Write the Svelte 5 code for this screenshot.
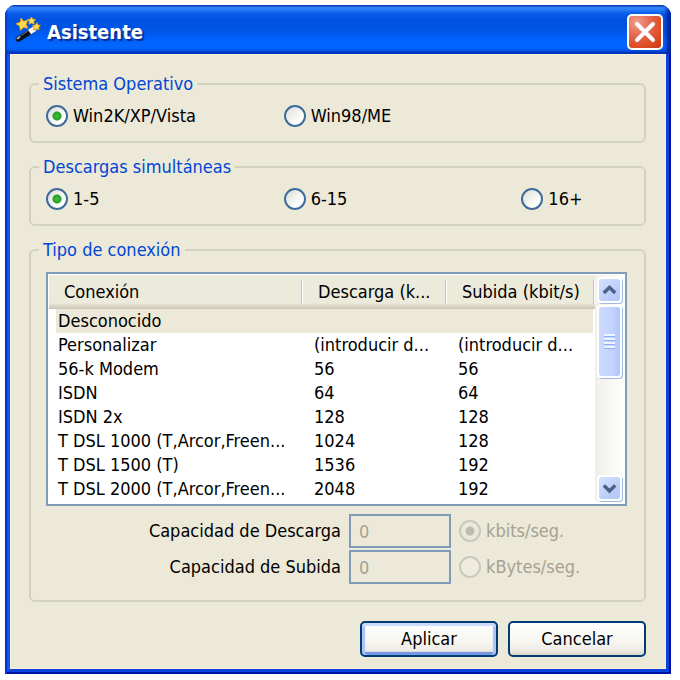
<script lang="ts">
	interface Connection {
		name: string;
		down: string;
		up: string;
	}

	const connections: Connection[] = [
		{ name: 'Desconocido', down: '', up: '' },
		{ name: 'Personalizar', down: '(introducir d...', up: '(introducir d...' },
		{ name: '56-k Modem', down: '56', up: '56' },
		{ name: 'ISDN', down: '64', up: '64' },
		{ name: 'ISDN 2x', down: '128', up: '128' },
		{ name: 'T DSL 1000 (T,Arcor,Freen...', down: '1024', up: '128' },
		{ name: 'T DSL 1500 (T)', down: '1536', up: '192' },
		{ name: 'T DSL 2000 (T,Arcor,Freen...', down: '2048', up: '192' }
	];

	const systems = ['Win2K/XP/Vista', 'Win98/ME'];
	const downloads = ['1-5', '6-15', '16+'];

	let system = $state('Win2K/XP/Vista');
	let simultaneous = $state('1-5');
	let selected = $state(0);
	let unit = $state('kbits');

	let custom = $derived(connections[selected].name === 'Personalizar');
</script>

<div class="window">
	<header class="titlebar">
		<svg class="wand" viewBox="0 0 26 26" aria-hidden="true">
			<path d="M3.500 22L15.500 14.500" stroke="#0c0f16" stroke-width="5.500" stroke-linecap="round" />
			<path d="M6 18.500L15 12.500" stroke="#555c6c" stroke-width="1.500" stroke-linecap="round" />
			<path d="M2.500 21.500L4.500 20" stroke="#aab2c4" stroke-width="2" stroke-linecap="round" />
			<path d="M14.500 15L20 11.500" stroke="#f6f4ee" stroke-width="5.500" />
			<path
				d="M6 1l2.500 3.200 4.500-1-2 4 2 4-4.500-.800-3.200 3-.600-4.400L1 6.800l4.400-1.800z"
				fill="#ffda45"
				stroke="#e0a51c"
				stroke-width=".8"
			/>
			<path
				d="M16.500 0l1.300 2.200 2.700.300-1.800 2 .500 2.700-2.700-1.200-2.500 1.200.400-2.700-1.900-2 2.700-.300z"
				fill="#ffe05a"
				stroke="#e0a51c"
				stroke-width=".8"
			/>
			<path
				d="M22 5.500l1 2.300 2.500.600-1.700 2 .300 2.700-2.600-.900-2.700 1 .200-2.700-1.700-2 3-.600z"
				fill="#ffda55"
				stroke="#c98a1c"
				stroke-width=".8"
			/>
		</svg>
		<h1>Asistente</h1>
		<button type="button" class="close" aria-label="Cerrar">
			<svg viewBox="0 0 30 30" aria-hidden="true">
				<path d="M7 7L23 23M23 7L7 23" stroke="#fff" stroke-width="4" stroke-linecap="round" />
			</svg>
		</button>
	</header>

	<form class="body" onsubmit={(e) => e.preventDefault()}>
		<fieldset>
			<legend>Sistema Operativo</legend>
			<div class="options">
				{#each systems as item}
					<label class="option">
						<input type="radio" name="system" value={item} bind:group={system} />
						{item}
					</label>
				{/each}
			</div>
		</fieldset>

		<fieldset>
			<legend>Descargas simultáneas</legend>
			<div class="options">
				{#each downloads as item}
					<label class="option">
						<input type="radio" name="downloads" value={item} bind:group={simultaneous} />
						{item}
					</label>
				{/each}
			</div>
		</fieldset>

		<fieldset class="connection">
			<legend>Tipo de conexión</legend>
			<div class="list">
				<table>
					<colgroup>
						<col />
						<col class="col-down" />
						<col class="col-up" />
					</colgroup>
					<thead>
						<tr>
							<th><span>Conexión</span></th>
							<th><span>Descarga (k...</span></th>
							<th><span>Subida (kbit/s)</span></th>
						</tr>
					</thead>
					<tbody>
						{#each connections as row, i}
							<tr class:selected={selected === i} onclick={() => (selected = i)}>
								<td>{row.name}</td>
								<td>{row.down}</td>
								<td>{row.up}</td>
							</tr>
						{/each}
					</tbody>
				</table>
				<div class="scrollbar">
					<button type="button" class="arrow" aria-label="Subir">
						<svg viewBox="0 0 24 24" aria-hidden="true">
							<path d="M5.500 15.500L12 9l6.500 6.500" />
						</svg>
					</button>
					<div class="thumb">
						<i></i><i></i><i></i><i></i>
					</div>
					<button type="button" class="arrow down" aria-label="Bajar">
						<svg viewBox="0 0 24 24" aria-hidden="true">
							<path d="M5.500 9L12 15.500 18.500 9" />
						</svg>
					</button>
				</div>
			</div>

			<div class="capacity">
				<label for="cap-down">Capacidad de Descarga</label>
				<input id="cap-down" type="text" value="0" disabled={!custom} />
				<label class="option" class:disabled={!custom}>
					<input type="radio" name="unit" value="kbits" bind:group={unit} disabled={!custom} />
					kbits/seg.
				</label>
				<label for="cap-up">Capacidad de Subida</label>
				<input id="cap-up" type="text" value="0" disabled={!custom} />
				<label class="option" class:disabled={!custom}>
					<input type="radio" name="unit" value="kbytes" bind:group={unit} disabled={!custom} />
					kBytes/seg.
				</label>
			</div>
		</fieldset>

		<div class="actions">
			<button type="submit" class="btn default">Aplicar</button>
			<button type="button" class="btn">Cancelar</button>
		</div>
	</form>
</div>

<style>
	:global(body) {
		background: #fff;
	}

	.window,
	.window button,
	.window input {
		font-family: 'DejaVu Sans Condensed', 'DejaVu Sans', Tahoma, sans-serif;
		font-size: 18px;
		line-height: 24px;
		color: #000;
	}

	.window * {
		box-sizing: border-box;
	}

	.window {
		margin: 5px 9px 5px 5px;
		border-radius: 11px 11px 0 0;
		overflow: hidden;
		background: linear-gradient(90deg, #0a2cd6 50%, #0010a0 50%);
	}

	.titlebar {
		display: flex;
		align-items: center;
		height: 49px;
		padding: 4px 8px 0 10px;
		background: linear-gradient(
			#0a48c8 0%,
			#3a90ff 5%,
			#2a80fa 9%,
			#0a5cea 17%,
			#0053e1 30%,
			#0054e6 50%,
			#0060fa 68%,
			#0267ff 84%,
			#005cf0 91%,
			#0040cc 97%,
			#003cc0 100%
		);
		box-shadow:
			inset 2px 0 2px #0a3ccc,
			inset -4px 0 4px #001c9c;
	}

	.wand {
		width: 26px;
		height: 26px;
		margin-bottom: 4px;
		fill: none;
	}

	h1 {
		flex: 1;
		margin: 0 0 0 6px;
		font-size: 20px;
		line-height: 28px;
		font-weight: 700;
		color: #fff;
		text-shadow: 2px 2px 1px #0a2c8c;
	}

	.close {
		width: 36px;
		height: 36px;
		padding: 1px;
		border: 2px solid #fff;
		border-radius: 5px;
		background: radial-gradient(circle at 25% 20%, #f0a08c 0%, #e2674a 40%, #dc4a20 75%, #c63a10 100%);
	}

	.close svg {
		display: block;
		width: 30px;
		height: 30px;
	}

	.body {
		display: flex;
		flex-direction: column;
		gap: 14px;
		margin: 0 2px;
		padding: 20px 20px 12px 19px;
		border: solid;
		border-width: 0 3px 3px;
		border-color: #0a50e8 #0a40dc #0a44e0 #0a58f0;
		box-shadow:
			inset 0 0 0 1px #fbf3d8,
			0 2px #0014a4;
		background: #ece9d8;
	}

	.window::after {
		content: '';
		display: block;
		height: 2px;
	}

	fieldset {
		min-width: 0;
		margin: 0;
		padding: 10px 17px 13px 15px;
		border: 2px solid #d3d2bf;
		border-radius: 6px;
	}

	fieldset.connection {
		padding-top: 12px;
		padding-bottom: 16px;
	}

	legend {
		margin-left: -7px;
		padding: 0 4px;
		line-height: 20px;
		color: #0046d5;
	}

	.options {
		display: grid;
		grid-template-columns: 9fr 9fr 4fr;
	}

	.option {
		display: flex;
		align-items: center;
		gap: 5px;
		white-space: nowrap;
	}

	input[type='radio'] {
		appearance: none;
		flex: none;
		width: 22px;
		height: 22px;
		margin: 0;
		border: 2px solid #3f6c9a;
		border-radius: 50%;
		background: linear-gradient(135deg, #dcdcd6, #fff 75%);
	}

	input[type='radio']:checked {
		background:
			radial-gradient(circle, #45bc45 0, #21a121 4px, transparent 5px),
			linear-gradient(135deg, #dcdcd6, #fff 75%);
	}

	input[type='radio']:disabled {
		border-color: #cac8bb;
		background: #efecdf;
	}

	input[type='radio']:disabled:checked {
		background: radial-gradient(circle, #bcbbb0 0, #bcbbb0 4px, transparent 5px);
	}

	.disabled {
		color: #a5a291;
	}

	.list {
		display: flex;
		padding: 1px 1px 3px;
		border: 2px solid #7f9db9;
		background: #fff;
	}

	table {
		flex: 1;
		width: 0;
		table-layout: fixed;
		border-collapse: separate;
		border-spacing: 0;
	}

	.col-down {
		width: 144px;
	}

	.col-up {
		width: 148px;
	}

	thead tr {
		height: 34px;
	}

	th {
		padding: 0;
		text-align: left;
		font-weight: 400;
		white-space: nowrap;
		background: linear-gradient(#ebeadb 28px, #d9d6c6 31px, #c9c5b4 34px);
	}

	th span {
		display: block;
		margin: 5px 1px 5px 0;
		padding-left: 15px;
		border-right: 1px solid #c7c5b2;
		box-shadow: 1px 0 #fff;
	}

	td {
		height: 24px;
		padding: 0 0 0 11px;
		overflow: hidden;
		white-space: nowrap;
	}

	td:first-child {
		padding-left: 2px;
		border-left: 7px solid #fff;
	}

	td:last-child {
		border-right: 2px solid #fff;
	}

	.selected td {
		background: #ece9d8;
	}

	.scrollbar {
		display: flex;
		flex-direction: column;
		gap: 2px;
		width: 29px;
		padding: 2px 2px 0;
		background: linear-gradient(90deg, #f1efe9, #fefefb);
	}

	.arrow,
	.thumb {
		width: 25px;
		border: 2px solid #fff;
		border-radius: 4px;
		background: linear-gradient(135deg, #d6e2ff, #bccffb 60%, #b2c7f7);
		background-clip: padding-box;
		box-shadow: 1px 1px 0 #9db8e4;
	}

	.arrow {
		height: 26px;
		padding: 0;
	}

	.arrow.down {
		margin-top: auto;
	}

	.arrow svg {
		display: block;
		width: 21px;
		height: 22px;
		fill: none;
		stroke: #4d6185;
		stroke-width: 4;
	}

	.thumb {
		display: flex;
		flex-direction: column;
		align-items: center;
		justify-content: center;
		gap: 1px;
		height: 73px;
		background: linear-gradient(90deg, #ccdafe, #c2d3fd 60%, #b0c6f8);
		background-clip: padding-box;
	}

	.thumb i {
		width: 11px;
		height: 3px;
		background: #eef4fe;
		border-bottom: 1px solid #8cb0f8;
	}

	.capacity {
		display: grid;
		grid-template-columns: 1fr 102px 168px;
		grid-auto-rows: 34px;
		align-items: center;
		gap: 2px 8px;
		margin-top: 8px;
	}

	.capacity > label:not(.option) {
		text-align: right;
	}

	input[type='text'] {
		width: 100%;
		height: 34px;
		padding: 0 8px;
		border: 2px solid #7f9db9;
		background: #fff;
	}

	input[type='text']:disabled {
		background: #ece9d8;
		color: #a5a291;
	}

	.actions {
		display: flex;
		justify-content: flex-end;
		gap: 10px;
		margin-top: 5px;
	}

	.window .btn {
		width: 138px;
		height: 36px;
		padding: 0;
		border: 2px solid #003c74;
		border-radius: 5px;
		background: linear-gradient(#fff, #f6f5f0 60%, #edebe4 85%, #dcd7cb);
	}

	.window .btn.default {
		box-shadow:
			inset 0 3px 1px #cadcfc,
			inset 3px 0 1px #a9c3f3,
			inset -3px 0 1px #a9c3f3,
			inset 0 -3px 1px #6f93e6;
	}
</style>
